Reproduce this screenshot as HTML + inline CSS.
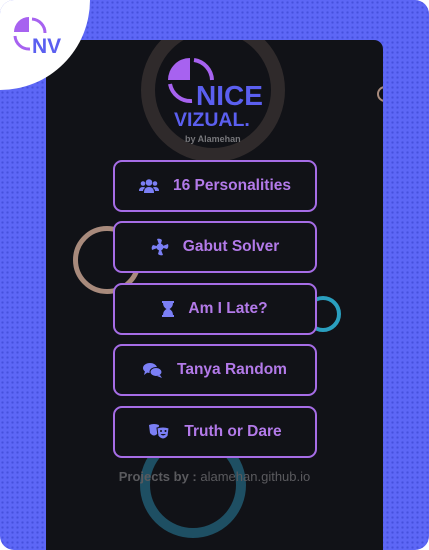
<!DOCTYPE html>
<html><head><style>
html,body{margin:0;padding:0;width:429px;height:550px;overflow:hidden;background:#fff}
.bg{position:absolute;left:0;top:0;width:429px;height:550px;border-radius:14px;background-color:#5d67f6;background-image:radial-gradient(#4650dc 1px,transparent 1.3px);background-size:5px 5px;overflow:hidden}
.card{position:absolute;left:46px;top:40px;width:337px;height:530px;background:#111217;border-radius:9px;overflow:hidden}
.ring{position:absolute;border-radius:50%;box-sizing:border-box}
.corner{position:absolute;left:-90px;top:-90px;width:180px;height:180px;border-radius:50%;background:#fff}
.btn{position:absolute;left:67px;width:204px;height:52px;box-sizing:border-box;border:2px solid #a66de6;border-radius:9px;background:#111217;display:flex;align-items:center;justify-content:center;color:#b37ae9;font:bold 15.5px "Liberation Sans",sans-serif}
.btn svg{margin-right:14px}
.foot{position:absolute;left:0;width:337px;top:429px;text-align:center;color:#5a5a5e;font:13px "Liberation Sans",sans-serif}
</style></head><body>
<div class="bg">
<div class="card">
 <div class="ring" style="left:95px;top:-22px;width:144px;height:144px;border:14px solid #2f2a2b"></div>
 <div class="ring" style="left:27px;top:186px;width:68px;height:68px;border:5px solid #a88a7c"></div>
 <div class="ring" style="left:259px;top:256px;width:36px;height:36px;border:4px solid #2a9fbf"></div>
 <div class="ring" style="left:94px;top:392px;width:106px;height:106px;border:10px solid #1e4f63"></div>
 <div class="ring" style="left:331px;top:46px;width:16px;height:16px;border:2px solid #a88a7c"></div>
 <svg style="position:absolute;left:68px;top:-26px" width="170" height="135" viewBox="114 14 170 135">
  <path d="M168 80 A22 22 0 0 1 190 58 L190 80 Z" fill="#a762f0"/>
  <path d="M194 60 A21 21 0 0 1 212 80" fill="none" stroke="#a762f0" stroke-width="4"/>
  <path d="M170 84 A21 21 0 0 0 192 101" fill="none" stroke="#a762f0" stroke-width="4"/>
  <text x="196" y="105" fill="#5b5ff0" font-family="Liberation Sans,sans-serif" font-weight="bold" font-size="28">NICE</text>
  <text x="174" y="126" fill="#5b5ff0" font-family="Liberation Sans,sans-serif" font-weight="bold" font-size="19.5">VIZUAL.</text>
  <text x="185" y="142" fill="#77777b" font-family="Liberation Sans,sans-serif" font-weight="bold" font-size="9">by Alamehan</text>
 </svg>
 <div class="btn" style="top:120px"><svg width="20" height="14" viewBox="0 0 20 14"><circle cx="10" cy="3.5" r="3.3" fill="#7b7ff5"/><circle cx="4" cy="4.5" r="2.3" fill="#7b7ff5"/><circle cx="16" cy="4.5" r="2.3" fill="#7b7ff5"/><path d="M5 14 Q5 8 10 8 Q15 8 15 14Z M0 12 Q0 8 4 8 Q6 8 6 9 Q4 10 4 12Z M20 12 Q20 8 16 8 Q14 8 14 9 Q16 10 16 12Z" fill="#7b7ff5"/></svg>16 Personalities</div>
 <div class="btn" style="top:181px"><svg width="18" height="18" viewBox="0 0 18 18"><g fill="#7b7ff5"><path d="M9 9 L6 1 Q9 0 11 2 L9 9Z"/><path d="M9 9 L17 6 Q18 9 16 11 Z"/><path d="M9 9 L12 17 Q9 18 7 16 Z"/><path d="M9 9 L1 12 Q0 9 2 7 Z"/><circle cx="9" cy="9" r="3.5"/></g></svg>Gabut Solver</div>
 <div class="btn" style="top:243px"><svg width="12" height="16" viewBox="0 0 12 16"><path d="M0 0h12v2h-1q0 4-3.5 6q3.5 2 3.5 6h1v2H0v-2h1q0-4 3.5-6Q1 6 1 2H0Z" fill="#7b7ff5"/></svg>Am I Late?</div>
 <div class="btn" style="top:304px"><svg width="20" height="16" viewBox="0 0 20 16"><ellipse cx="7" cy="6" rx="7" ry="5" fill="#7b7ff5"/><ellipse cx="13" cy="10" rx="6" ry="4.5" fill="#7b7ff5" stroke="#111217" stroke-width="1"/><path d="M2 9 L1 13 L5 10Z M17 13 L19 16 L14 14Z" fill="#7b7ff5"/></svg>Tanya Random</div>
 <div class="btn" style="top:366px"><svg width="22" height="18" viewBox="0 0 22 18"><path d="M1 2 Q6 0 11 2 L10 10 Q6 15 2 10Z" fill="#7b7ff5"/><path d="M9 5 Q15 3 21 5 L20 13 Q15 19 10 13Z" fill="#7b7ff5" stroke="#111217" stroke-width="1"/><circle cx="13" cy="8" r="1" fill="#111217"/><circle cx="17.5" cy="8" r="1" fill="#111217"/><path d="M12.5 11 Q15 14 18 11Z" fill="#111217"/></svg>Truth or Dare</div>
 <div class="foot"><b>Projects by :</b> alamehan.github.io</div>
</div>
<div class="corner"></div>
<svg style="position:absolute;left:10px;top:16px" width="60" height="44" viewBox="10 16 60 44">
 <path d="M14 32 A15 15 0 0 1 29 17 L29 32Z" fill="#a762f0"/>
 <path d="M32 19 A14 14 0 0 1 45 33" fill="none" stroke="#a762f0" stroke-width="3"/>
 <path d="M15 36 A14 14 0 0 0 30 49" fill="none" stroke="#a762f0" stroke-width="3"/>
 <text x="32" y="53" fill="#5b5ff0" font-family="Liberation Sans,sans-serif" font-weight="bold" font-size="21">NV</text>
</svg>
</div>
</body></html>
